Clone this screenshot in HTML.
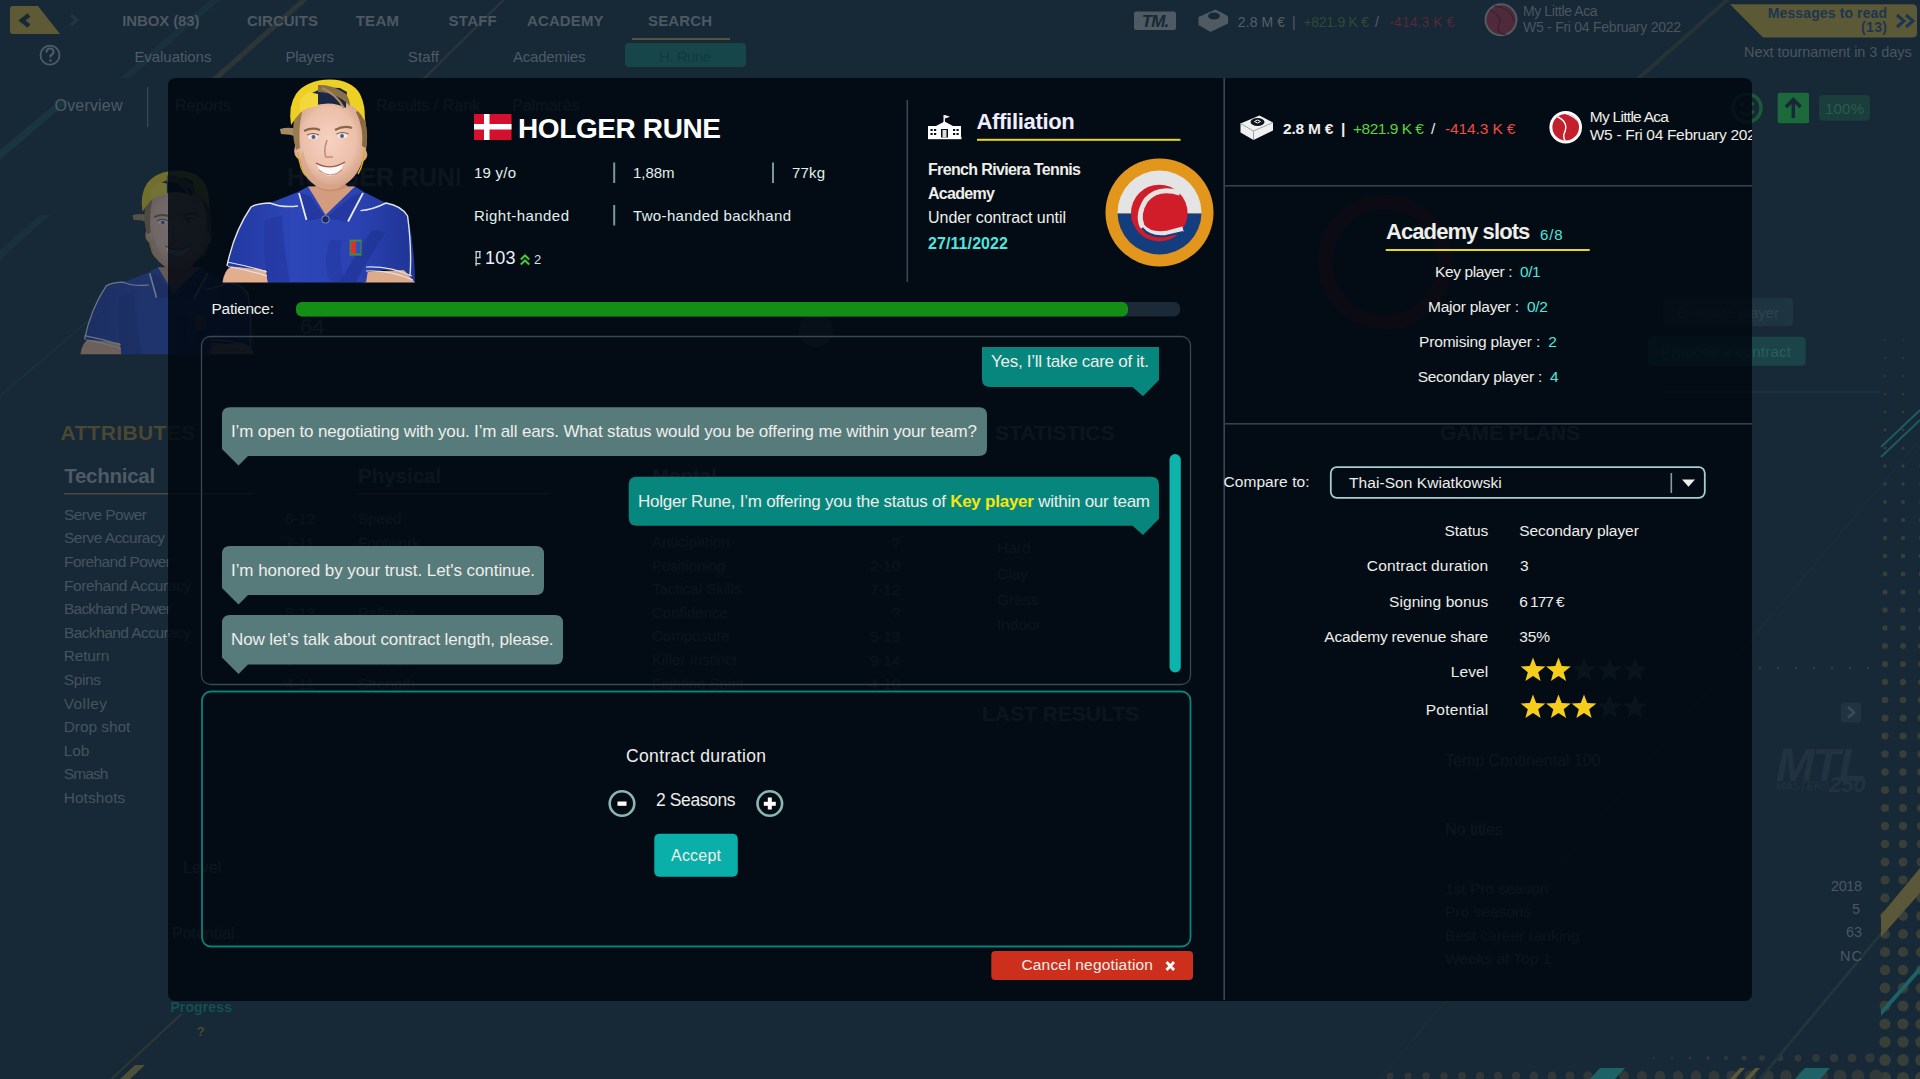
<!DOCTYPE html>
<html><head><meta charset="utf-8">
<style>
*{margin:0;padding:0;box-sizing:border-box}
html,body{width:1920px;height:1079px;overflow:hidden;background:#172836;font-family:"Liberation Sans",sans-serif;color:#fff}
.a{position:absolute;white-space:nowrap;line-height:1}
#modal{position:absolute;left:168px;top:78px;width:1584px;height:923px;background:rgba(0,7,15,0.84);border-radius:7px;overflow:hidden}
</style></head><body>
<svg class="a" style="left:0;top:0" width="1920" height="1079">
<path d="M120 78 L210 0 L220 0 L130 78 Z" fill="#1b3a44" opacity="0.5"/>
<path d="M212 78 L300 0 L308 0 L220 78 Z" fill="#3a3f38" opacity="0.6"/>
<path d="M421 80 L502 0 L505 0 L424 80 Z" fill="#3a3f38" opacity="0.6"/>
<path d="M0 150 L60 100 L70 100 L0 160 Z" fill="#1b3a44" opacity="0.7"/>
<path d="M0 250 L40 215 L50 215 L0 260 Z" fill="#1b3a44" opacity="0.5"/>
<path d="M0 395 L100 310 L102 310 L0 397 Z" fill="#1d3d48" opacity="0.5"/>
<path d="M110 1079 L180 1014 L183 1014 L113 1079 Z" fill="#343b36" opacity="0.8"/>
<path d="M120 1079 L135 1065 L145 1065 L130 1079 Z" fill="#5a5a38" opacity="0.8"/>
<path d="M1636 78 L1724 0 L1730 0 L1642 78 Z" fill="#343b36" opacity="0.5"/>
<circle cx="1885" cy="340" r="0.8" fill="#383e38"/>
<circle cx="1903" cy="340" r="0.8" fill="#383e38"/>
<circle cx="1921" cy="340" r="0.8" fill="#383e38"/>
<circle cx="1885" cy="358" r="0.9" fill="#383e38"/>
<circle cx="1903" cy="358" r="0.9" fill="#383e38"/>
<circle cx="1921" cy="358" r="0.9" fill="#383e38"/>
<circle cx="1885" cy="376" r="1.1" fill="#383e38"/>
<circle cx="1903" cy="376" r="1.1" fill="#383e38"/>
<circle cx="1921" cy="376" r="1.1" fill="#383e38"/>
<circle cx="1885" cy="394" r="1.2" fill="#383e38"/>
<circle cx="1903" cy="394" r="1.2" fill="#383e38"/>
<circle cx="1921" cy="394" r="1.2" fill="#383e38"/>
<circle cx="1885" cy="412" r="1.3" fill="#383e38"/>
<circle cx="1903" cy="412" r="1.3" fill="#383e38"/>
<circle cx="1921" cy="412" r="1.3" fill="#383e38"/>
<circle cx="1885" cy="430" r="1.4" fill="#383e38"/>
<circle cx="1903" cy="430" r="1.4" fill="#383e38"/>
<circle cx="1921" cy="430" r="1.4" fill="#383e38"/>
<circle cx="1885" cy="448" r="1.6" fill="#383e38"/>
<circle cx="1903" cy="448" r="1.6" fill="#383e38"/>
<circle cx="1921" cy="448" r="1.6" fill="#383e38"/>
<circle cx="1885" cy="466" r="1.7" fill="#383e38"/>
<circle cx="1903" cy="466" r="1.7" fill="#383e38"/>
<circle cx="1921" cy="466" r="1.7" fill="#383e38"/>
<circle cx="1885" cy="484" r="1.8" fill="#383e38"/>
<circle cx="1903" cy="484" r="1.8" fill="#383e38"/>
<circle cx="1921" cy="484" r="1.8" fill="#383e38"/>
<circle cx="1885" cy="502" r="1.9" fill="#383e38"/>
<circle cx="1903" cy="502" r="1.9" fill="#383e38"/>
<circle cx="1921" cy="502" r="1.9" fill="#383e38"/>
<circle cx="1885" cy="520" r="2.1" fill="#383e38"/>
<circle cx="1903" cy="520" r="2.1" fill="#383e38"/>
<circle cx="1921" cy="520" r="2.1" fill="#383e38"/>
<circle cx="1885" cy="538" r="2.2" fill="#383e38"/>
<circle cx="1903" cy="538" r="2.2" fill="#383e38"/>
<circle cx="1921" cy="538" r="2.2" fill="#383e38"/>
<circle cx="1885" cy="556" r="2.3" fill="#383e38"/>
<circle cx="1903" cy="556" r="2.3" fill="#383e38"/>
<circle cx="1921" cy="556" r="2.3" fill="#383e38"/>
<circle cx="1885" cy="574" r="2.4" fill="#383e38"/>
<circle cx="1903" cy="574" r="2.4" fill="#383e38"/>
<circle cx="1921" cy="574" r="2.4" fill="#383e38"/>
<circle cx="1885" cy="592" r="2.6" fill="#383e38"/>
<circle cx="1903" cy="592" r="2.6" fill="#383e38"/>
<circle cx="1921" cy="592" r="2.6" fill="#383e38"/>
<circle cx="1885" cy="610" r="2.7" fill="#383e38"/>
<circle cx="1903" cy="610" r="2.7" fill="#383e38"/>
<circle cx="1921" cy="610" r="2.7" fill="#383e38"/>
<circle cx="1885" cy="628" r="2.8" fill="#383e38"/>
<circle cx="1903" cy="628" r="2.8" fill="#383e38"/>
<circle cx="1921" cy="628" r="2.8" fill="#383e38"/>
<circle cx="1885" cy="646" r="3.0" fill="#383e38"/>
<circle cx="1903" cy="646" r="3.0" fill="#383e38"/>
<circle cx="1921" cy="646" r="3.0" fill="#383e38"/>
<circle cx="1885" cy="664" r="3.1" fill="#383e38"/>
<circle cx="1903" cy="664" r="3.1" fill="#383e38"/>
<circle cx="1921" cy="664" r="3.1" fill="#383e38"/>
<circle cx="1885" cy="682" r="3.2" fill="#383e38"/>
<circle cx="1903" cy="682" r="3.2" fill="#383e38"/>
<circle cx="1921" cy="682" r="3.2" fill="#383e38"/>
<circle cx="1885" cy="700" r="3.3" fill="#383e38"/>
<circle cx="1903" cy="700" r="3.3" fill="#383e38"/>
<circle cx="1921" cy="700" r="3.3" fill="#383e38"/>
<circle cx="1885" cy="718" r="3.5" fill="#383e38"/>
<circle cx="1903" cy="718" r="3.5" fill="#383e38"/>
<circle cx="1921" cy="718" r="3.5" fill="#383e38"/>
<circle cx="1885" cy="736" r="3.6" fill="#383e38"/>
<circle cx="1903" cy="736" r="3.6" fill="#383e38"/>
<circle cx="1921" cy="736" r="3.6" fill="#383e38"/>
<circle cx="1885" cy="754" r="3.7" fill="#383e38"/>
<circle cx="1903" cy="754" r="3.7" fill="#383e38"/>
<circle cx="1921" cy="754" r="3.7" fill="#383e38"/>
<circle cx="1885" cy="772" r="3.8" fill="#383e38"/>
<circle cx="1903" cy="772" r="3.8" fill="#383e38"/>
<circle cx="1921" cy="772" r="3.8" fill="#383e38"/>
<circle cx="1885" cy="790" r="4.0" fill="#383e38"/>
<circle cx="1903" cy="790" r="4.0" fill="#383e38"/>
<circle cx="1921" cy="790" r="4.0" fill="#383e38"/>
<circle cx="1885" cy="808" r="4.1" fill="#383e38"/>
<circle cx="1903" cy="808" r="4.1" fill="#383e38"/>
<circle cx="1921" cy="808" r="4.1" fill="#383e38"/>
<circle cx="1885" cy="826" r="4.2" fill="#383e38"/>
<circle cx="1903" cy="826" r="4.2" fill="#383e38"/>
<circle cx="1921" cy="826" r="4.2" fill="#383e38"/>
<circle cx="1885" cy="844" r="4.3" fill="#383e38"/>
<circle cx="1903" cy="844" r="4.3" fill="#383e38"/>
<circle cx="1921" cy="844" r="4.3" fill="#383e38"/>
<circle cx="1885" cy="862" r="4.5" fill="#383e38"/>
<circle cx="1903" cy="862" r="4.5" fill="#383e38"/>
<circle cx="1921" cy="862" r="4.5" fill="#383e38"/>
<circle cx="1885" cy="880" r="4.6" fill="#383e38"/>
<circle cx="1903" cy="880" r="4.6" fill="#383e38"/>
<circle cx="1921" cy="880" r="4.6" fill="#383e38"/>
<circle cx="1885" cy="898" r="4.7" fill="#383e38"/>
<circle cx="1903" cy="898" r="4.7" fill="#383e38"/>
<circle cx="1921" cy="898" r="4.7" fill="#383e38"/>
<circle cx="1885" cy="916" r="4.9" fill="#383e38"/>
<circle cx="1903" cy="916" r="4.9" fill="#383e38"/>
<circle cx="1921" cy="916" r="4.9" fill="#383e38"/>
<circle cx="1885" cy="934" r="5.0" fill="#383e38"/>
<circle cx="1903" cy="934" r="5.0" fill="#383e38"/>
<circle cx="1921" cy="934" r="5.0" fill="#383e38"/>
<circle cx="1885" cy="952" r="5.1" fill="#383e38"/>
<circle cx="1903" cy="952" r="5.1" fill="#383e38"/>
<circle cx="1921" cy="952" r="5.1" fill="#383e38"/>
<circle cx="1885" cy="970" r="5.2" fill="#383e38"/>
<circle cx="1903" cy="970" r="5.2" fill="#383e38"/>
<circle cx="1921" cy="970" r="5.2" fill="#383e38"/>
<circle cx="1885" cy="988" r="5.4" fill="#383e38"/>
<circle cx="1903" cy="988" r="5.4" fill="#383e38"/>
<circle cx="1921" cy="988" r="5.4" fill="#383e38"/>
<circle cx="1885" cy="1006" r="5.5" fill="#383e38"/>
<circle cx="1903" cy="1006" r="5.5" fill="#383e38"/>
<circle cx="1921" cy="1006" r="5.5" fill="#383e38"/>
<circle cx="1885" cy="1024" r="5.6" fill="#383e38"/>
<circle cx="1903" cy="1024" r="5.6" fill="#383e38"/>
<circle cx="1921" cy="1024" r="5.6" fill="#383e38"/>
<circle cx="1885" cy="1042" r="5.7" fill="#383e38"/>
<circle cx="1903" cy="1042" r="5.7" fill="#383e38"/>
<circle cx="1921" cy="1042" r="5.7" fill="#383e38"/>
<circle cx="1885" cy="1060" r="5.9" fill="#383e38"/>
<circle cx="1903" cy="1060" r="5.9" fill="#383e38"/>
<circle cx="1921" cy="1060" r="5.9" fill="#383e38"/>
<circle cx="1885" cy="1078" r="6.0" fill="#383e38"/>
<circle cx="1903" cy="1078" r="6.0" fill="#383e38"/>
<circle cx="1921" cy="1078" r="6.0" fill="#383e38"/>
<circle cx="1390" cy="1076" r="3.5" fill="#30383a"/>
<circle cx="1408" cy="1076" r="3.6" fill="#30383a"/>
<circle cx="1426" cy="1076" r="3.7" fill="#30383a"/>
<circle cx="1444" cy="1076" r="3.8" fill="#30383a"/>
<circle cx="1462" cy="1076" r="3.9" fill="#30383a"/>
<circle cx="1480" cy="1076" r="4.1" fill="#30383a"/>
<circle cx="1498" cy="1076" r="4.2" fill="#30383a"/>
<circle cx="1516" cy="1076" r="4.3" fill="#30383a"/>
<circle cx="1534" cy="1076" r="4.4" fill="#30383a"/>
<circle cx="1552" cy="1076" r="4.5" fill="#30383a"/>
<circle cx="1570" cy="1076" r="4.6" fill="#30383a"/>
<circle cx="1588" cy="1076" r="4.7" fill="#30383a"/>
<circle cx="1606" cy="1076" r="4.8" fill="#30383a"/>
<circle cx="1624" cy="1076" r="4.9" fill="#30383a"/>
<circle cx="1642" cy="1076" r="5.0" fill="#30383a"/>
<circle cx="1660" cy="1076" r="5.2" fill="#30383a"/>
<circle cx="1678" cy="1076" r="5.3" fill="#30383a"/>
<circle cx="1696" cy="1076" r="5.4" fill="#30383a"/>
<circle cx="1714" cy="1076" r="5.5" fill="#30383a"/>
<circle cx="1732" cy="1076" r="5.6" fill="#30383a"/>
<circle cx="1750" cy="1076" r="5.7" fill="#30383a"/>
<circle cx="1768" cy="1076" r="5.8" fill="#30383a"/>
<circle cx="1786" cy="1076" r="5.9" fill="#30383a"/>
<circle cx="1804" cy="1076" r="6.0" fill="#30383a"/>
<circle cx="1822" cy="1076" r="6.1" fill="#30383a"/>
<circle cx="1840" cy="1076" r="6.3" fill="#30383a"/>
<circle cx="1858" cy="1076" r="6.4" fill="#30383a"/>
<circle cx="1876" cy="1076" r="6.5" fill="#30383a"/>
<circle cx="1600" cy="1058" r="0.0" fill="#30383a"/>
<circle cx="1618" cy="1058" r="0.3" fill="#30383a"/>
<circle cx="1636" cy="1058" r="0.6" fill="#30383a"/>
<circle cx="1654" cy="1058" r="1.0" fill="#30383a"/>
<circle cx="1672" cy="1058" r="1.3" fill="#30383a"/>
<circle cx="1690" cy="1058" r="1.6" fill="#30383a"/>
<circle cx="1708" cy="1058" r="1.9" fill="#30383a"/>
<circle cx="1726" cy="1058" r="2.2" fill="#30383a"/>
<circle cx="1744" cy="1058" r="2.6" fill="#30383a"/>
<circle cx="1762" cy="1058" r="2.9" fill="#30383a"/>
<circle cx="1780" cy="1058" r="3.2" fill="#30383a"/>
<circle cx="1798" cy="1058" r="3.5" fill="#30383a"/>
<circle cx="1816" cy="1058" r="3.9" fill="#30383a"/>
<circle cx="1834" cy="1058" r="4.2" fill="#30383a"/>
<circle cx="1852" cy="1058" r="4.5" fill="#30383a"/>
<circle cx="1870" cy="1058" r="4.8" fill="#30383a"/>
<circle cx="1760" cy="668" r="1" fill="#3a4640"/>
<circle cx="1778" cy="668" r="1" fill="#3a4640"/>
<circle cx="1796" cy="668" r="1" fill="#3a4640"/>
<circle cx="1814" cy="668" r="1" fill="#3a4640"/>
<circle cx="1832" cy="668" r="1" fill="#3a4640"/>
<circle cx="1850" cy="668" r="1" fill="#3a4640"/>
<circle cx="1868" cy="668" r="1" fill="#3a4640"/>
<path d="M1881 915 L1920 868 L1920 893 L1881 937 Z" fill="#5a5838"/>
<path d="M1881 1010 L1920 966 L1920 972 L1881 1016 Z" fill="#1d6266"/>
<path d="M1881 447 L1920 410 M1881 457 L1920 420" stroke="#1d5a60" stroke-width="2"/>
<path d="M1760 1079 L1880 935" stroke="#22343c" stroke-width="3"/>
<path d="M1590 1079 L1600 1068 L1625 1068 L1615 1079 Z" fill="#1d6266"/>
<path d="M1795 1079 L1805 1068 L1830 1068 L1820 1079 Z" fill="#1d6266"/>
<path d="M1730 1079 L1740 1068 L1745 1068 L1735 1079 Z M1745 1079 L1755 1068 L1760 1068 L1750 1079 Z" fill="#5a5838"/>
<path d="M1380 1079 L1970 380" stroke="#1e3039" stroke-width="2" opacity="0.6"/>
<path d="M13 6 H38 L60 34 H13 Q10 34 10 31 V9 Q10 6 13 6 Z" fill="#5e5a35"/>
<path d="M29 15 L22 20.5 L29 26" stroke="#172836" stroke-width="4.5" fill="none"/>
<path d="M71 15 L77 20 L71 25" stroke="#233545" stroke-width="3" fill="none"/>
<rect x="632" y="38" width="98" height="2" fill="#58533a"/>
<circle cx="50" cy="55.2" r="9.5" fill="none" stroke="#4f5d68" stroke-width="1.8"/>
<path d="M46.5 52.5 Q46.5 48.5 50 48.5 Q53.5 48.5 53.5 52 Q53.5 54 50.5 55.5 L50.5 57.5" stroke="#4f5d68" stroke-width="2" fill="none"/><circle cx="50.5" cy="60.5" r="1.2" fill="#4f5d68"/>
<rect x="625" y="43" width="121" height="24" rx="4" fill="#17464a"/>
<rect x="64" y="493" width="190" height="1.5" fill="#4a4a36"/>
<rect x="358" y="493" width="192" height="1.5" fill="#4a4a36"/>
<rect x="652" y="493" width="192" height="1.5" fill="#4a4a36"/>
<rect x="147" y="87" width="1.2" height="40" fill="#3a4a55"/>
<rect x="1134" y="11.5" width="42" height="18.5" rx="2" fill="#4f5a62"/><text x="1155" y="27" font-family="Liberation Sans" font-weight="bold" font-style="italic" font-size="17" fill="#172836" text-anchor="middle" letter-spacing="-1">TM.</text>
<g transform="translate(1198.5,8)"><path d="M0 9 L17 1.5 L29.5 8 L29.5 15.5 L12 24 L0 17 Z" fill="#4f5a62"/><ellipse cx="15.5" cy="8" rx="6" ry="3.5" fill="#172836"/></g>
<circle cx="1501" cy="19.8" r="15.5" fill="#4e2a3a" stroke="#565a62" stroke-width="2"/>
<path d="M1490 10 Q1504 16 1498 28 Q1497 33 1506 35 M1494 6 Q1512 8 1514 22" stroke="#3a2030" stroke-width="1.2" fill="none"/>
<path d="M1730 4.3 H1912 Q1917 4.3 1917 9 V33 Q1917 37.6 1912 37.6 H1763 Z" fill="#5c5a36"/>
<path d="M1897 15 L1904 21 L1897 27 M1906 15 L1913 21 L1906 27" stroke="#1e3550" stroke-width="3" fill="none"/>
<circle cx="1747" cy="108" r="14" fill="none" stroke="#1a5a38" stroke-width="3.5"/><circle cx="1742" cy="104" r="2" fill="#1a5a38"/><circle cx="1752" cy="104" r="2" fill="#1a5a38"/><path d="M1740 111 Q1747 118 1754 111" stroke="#1a5a38" stroke-width="2.5" fill="none"/>
<rect x="1777.7" y="92.7" width="31.3" height="30.6" rx="2" fill="#1c6a3c"/><path d="M1793.3 118 V100 M1786 107 L1793.3 99.5 L1800.6 107" stroke="#172836" stroke-width="3.5" fill="none"/>
<rect x="1819" y="95" width="51" height="25.7" rx="4" fill="#1a3e3c"/>
<rect x="1663" y="298" width="130" height="28" rx="4" fill="#1f3441"/>
<rect x="1648" y="336.7" width="157.7" height="29" rx="4" fill="#1a4448"/>
<rect x="1660" y="391" width="220" height="2" fill="#1e3540" opacity="0.7"/>
<rect x="1841" y="702.4" width="20" height="20" rx="3" fill="#1f3340"/><path d="M1848 707 L1854 712.4 L1848 717.8" stroke="#3f4a52" stroke-width="2.5" fill="none"/>
<text x="1776" y="781" font-family="Liberation Sans" font-weight="bold" font-style="italic" font-size="46" fill="#223240" letter-spacing="-2">MTL</text>
<text x="1776" y="790" font-family="Liberation Sans" font-style="italic" font-size="11" fill="#223240">MASTERS</text>
<text x="1829" y="792" font-family="Liberation Sans" font-weight="bold" font-style="italic" font-size="22" fill="#223240">250</text>
</svg>
<div class="a" style="left:175px;top:98px;font-size:16px;color:#4f5b65">Reports</div>
<div class="a" style="left:376px;top:98px;font-size:16px;color:#4f5b65">Results / Rank</div>
<div class="a" style="left:512px;top:98px;font-size:16px;color:#4f5b65">Palmarès</div>
<div class="a" style="left:287px;top:160px;width:173px;height:36px;overflow:hidden"><div class="a" style="left:0;top:5px;font-size:25px;font-weight:bold;color:#4f5b65">HOLGER RUNE</div></div>
<div class="a" style="left:300px;top:316px;font-size:22px;color:#4f5b65">64</div>
<div class="a" style="left:358px;top:466px;font-size:20.5px;font-weight:bold;color:#4e5a64">Physical</div>
<div class="a" style="left:652px;top:466px;font-size:20.5px;font-weight:bold;color:#4e5a64">Mental</div>
<div class="a" style="left:358px;top:507px;font-size:15px;line-height:23.6px;color:#47535d">Speed<br>Footwork<br>Stamina<br>Endurance<br>Reflexes<br>Agility<br>Balance<br>Strength</div>
<div class="a" style="left:285px;top:507px;font-size:15px;line-height:23.6px;color:#47535d">6-12<br>7-11<br>6-11<br>?<br>8-13<br>?<br>?<br>4-11</div>
<div class="a" style="left:652px;top:530px;font-size:15px;line-height:23.6px;color:#47535d">Anticipation<br>Positioning<br>Tactical Skills<br>Confidence<br>Composure<br>Killer Instinct<br>Fighting Spirit</div>
<div class="a" style="left:860px;top:507px;font-size:15px;line-height:23.6px;color:#47535d;text-align:right;width:40px">?<br>?<br>2-10<br>7-12<br>?<br>5-13<br>9-14<br>4-10</div>
<div class="a" style="left:995px;top:422px;font-size:21px;font-weight:bold;color:#4e5a64">STATISTICS</div>
<div class="a" style="left:997px;top:535px;font-size:15.5px;line-height:25.8px;color:#47535d">Hard<br>Clay<br>Grass<br>Indoor</div>
<div class="a" style="left:982px;top:703px;font-size:21px;font-weight:bold;color:#4e5a64">LAST RESULTS</div>
<div class="a" style="left:1440px;top:422px;font-size:21px;font-weight:bold;color:#4e5a64">GAME PLANS</div>
<div class="a" style="left:1445px;top:753px;font-size:16px;color:#4f5b65">Temp Continental 100</div>
<div class="a" style="left:1445px;top:822px;font-size:16px;color:#4f5b65">No titles</div>
<div class="a" style="left:1445px;top:877px;font-size:15.5px;line-height:23.4px;color:#47535d">1st Pro season<br>Pro seasons<br>Best career ranking<br>Weeks at Top 1</div>
<div class="a" style="left:183px;top:860px;font-size:16px;color:#4f5b65">Level</div>
<div class="a" style="left:172px;top:926px;font-size:16px;color:#4f5b65">Potential</div>
<svg class="a" style="left:0;top:0" width="1920" height="1079"><circle cx="1385" cy="262" r="60" fill="none" stroke="#5a2030" stroke-width="14" opacity="0.8"/><circle cx="816" cy="330" r="17" fill="#2e3a44"/></svg>
<svg class="a" style="left:0;top:0" width="1920" height="1079"><g opacity="0.42" transform="translate(80,170) scale(0.905) translate(-222,-79)">
 <!-- arms -->
 <path d="M222.5 282.5 Q224 270 232 266 L266 270 L268 282.5 Z" fill="#e3ae8e"/>
 <path d="M364 272 L404 270 Q412 274 415 282.5 L364 282.5 Z" fill="#ddaa8c"/>
 <!-- shirt body -->
 <path d="M227 266 Q236 230 251 207 Q258 203 270 203 L298 192 L308 186.5 L355 186.5 L364 192 L386 203 Q402 206 408 216 Q415 250 415 282.5 L404 270 L368 270 L366 282.5 L268 282.5 L267 270 Z" fill="url(#shg)"/>
 <path d="M265 220 Q262 250 268 282 L290 282 Q284 250 282 215 Z" fill="#2338a0" opacity="0.7"/>
 <path d="M330 240 Q322 262 330 282 L345 282 Q338 262 342 240 Z" fill="#2338a0" opacity="0.6"/>
 <path d="M372 230 Q352 260 340 282 L356 282 Q368 258 386 232 Z" fill="#1e3290" opacity="0.6"/>
 <!-- neck -->
 <path d="M308 186.5 L355 186.5 L325.5 215 Z" fill="#d49c7e"/>
 <path d="M315 186.5 Q330 196 348 186.5 L340 180 L320 180 Z" fill="#c88e70"/>
 <!-- collar -->
 <path d="M298 192 L306 221 L325.5 218 L310 196 Z" fill="#2338a0"/>
 <path d="M364 192 L348.5 222 L325.5 218 L352 196 Z" fill="#2338a0"/>
 <path d="M299 193 L306.5 220" stroke="#e8ecf4" stroke-width="1.8"/>
 <path d="M363 193 L348 221.5" stroke="#e8ecf4" stroke-width="1.8"/>
 <circle cx="325.5" cy="219.4" r="3.8" fill="#1a2660" stroke="#8090b0" stroke-width="1"/>
 <!-- seams -->
 <path d="M227 266 Q234 232 251 207 Q258 203 270 203 Q282 208 298 206" stroke="#dde2f0" stroke-width="1.4" fill="none"/>
 <path d="M360.5 210.6 Q372 210 386 203 Q402 206 407.6 216 Q412 250 410 276" stroke="#dde2f0" stroke-width="1.4" fill="none"/>
 <path d="M227 262 Q248 266 267 272 M228 266.5 Q248 270 267 276" stroke="#dde2f0" stroke-width="1.2" fill="none"/>
 <path d="M366 267 Q390 266 412 276 M366 271 Q390 270 413 280" stroke="#dde2f0" stroke-width="1.2" fill="none"/>
 <rect x="349.6" y="239.6" width="12" height="16" fill="#4a8a3a"/><rect x="351" y="241.5" width="5" height="12" fill="#d8302a"/><rect x="356" y="241.5" width="4.5" height="12" fill="#2a52c0"/>
 <!-- hair lock left -->
 <path d="M280 129 Q290 126 300 130 L298 137 Q290 134 281 134 Z" fill="#a88a62"/>
 <!-- face -->
 <path d="M296 112 Q300 100 330 100 Q362 100 365 118 Q368 140 366 150 Q370 158 362 162 Q356 180 340 187 Q330 192 318 187 Q302 178 300 160 Q292 156 295 146 Q294 130 296 112 Z" fill="url(#fg)"/>
 <path d="M300 160 Q304 178 320 188 Q332 192 342 187 Q330 186 318 180 Q306 170 303 150 Z" fill="#d9a58a" opacity="0.7"/>
 <path d="M296 112 Q290 130 296 150 L300 148 Q298 130 302 112 Z" fill="#9a7a50"/>
 <path d="M360 110 Q370 126 366 148 L362 146 Q364 128 356 112 Z" fill="#8a6a40"/>
 <!-- brows, eyes -->
 <path d="M304 131 Q312 127 320 130" stroke="#8a6648" stroke-width="2.2" fill="none"/>
 <path d="M335 130 Q344 125 352 128" stroke="#8a6648" stroke-width="2.2" fill="none"/>
 <ellipse cx="313" cy="137" rx="5" ry="2.2" fill="#f4e8e4"/><circle cx="313.5" cy="137" r="2" fill="#4a6088"/>
 <ellipse cx="342.5" cy="136" rx="5" ry="2.2" fill="#f4e8e4"/><circle cx="342" cy="136" r="2" fill="#4a6088"/>
 <path d="M307 135 Q313 132 319 135" stroke="#7a5a48" stroke-width="1.2" fill="none"/>
 <path d="M336.5 134 Q342.5 131 348.5 134" stroke="#7a5a48" stroke-width="1.2" fill="none"/>
 <path d="M327 140 Q323 152 326 157 L333 157" stroke="#c48c70" stroke-width="1.6" fill="none"/>
 <!-- smile -->
 <path d="M317 164 Q330 172 344 163 Q340 175 330 176 Q320 175 317 164 Z" fill="#fafafa"/>
 <path d="M316 163 Q330 171 345 162" stroke="#9a5040" stroke-width="1.2" fill="none"/>
 <path d="M319 170 Q330 180 342 170" stroke="#c88070" stroke-width="1" fill="none"/>
 <!-- cap -->
 <path d="M291 125 Q288 106 296 94 Q306 80 330 79.5 Q352 80 360 94 Q366 106 364.5 120.5 Q358 108 348 104 Q330 98 312 104 Q300 110 291 125 Z" fill="#edd024"/>
 <path d="M305 98 Q318 86 340 88 L347 92 Q346 100 346 108 Q332 100 312 106 Z" fill="#1b2844"/>
 <path d="M300 100 L308 92 L318 94 L318 106 Q306 108 300 112 Z" fill="#f2d83a"/>
 <path d="M318 85 Q332 84 346 94 Q350 100 350 106 Q336 92 318 92 Z" fill="#8a6e48"/>
 <path d="M322 88 Q336 94 344 108" stroke="#a88a60" stroke-width="2" fill="none"/>
 <path d="M298 152 Q300 170 306 176" stroke="#d8b020" stroke-width="1.5" fill="none"/>
 <path d="M364 150 Q364 164 358 174" stroke="#d8b020" stroke-width="1.5" fill="none"/>
</g></svg>
<div id="t1000" class="a" style="left:122.3px;top:12.7px;font-size:15px;color:#4d5862;letter-spacing:-0.129px;font-weight:bold">INBOX (83)</div>
<div id="t1001" class="a" style="left:247.0px;top:12.7px;font-size:15px;color:#4d5862;letter-spacing:0.022px;font-weight:bold">CIRCUITS</div>
<div id="t1002" class="a" style="left:355.7px;top:12.7px;font-size:15px;color:#4d5862;letter-spacing:0.267px;font-weight:bold">TEAM</div>
<div id="t1003" class="a" style="left:448.6px;top:12.7px;font-size:15px;color:#4d5862;letter-spacing:0.245px;font-weight:bold">STAFF</div>
<div id="t1004" class="a" style="left:527.0px;top:12.7px;font-size:15px;color:#4d5862;letter-spacing:0.109px;font-weight:bold">ACADEMY</div>
<div id="t1005" class="a" style="left:648.0px;top:12.7px;font-size:15px;color:#4d5862;letter-spacing:0.131px;font-weight:bold">SEARCH</div>
<div id="t1006" class="a" style="left:134.4px;top:48.8px;font-size:15px;color:#4f5b65;letter-spacing:-0.056px">Evaluations</div>
<div id="t1007" class="a" style="left:285.5px;top:48.8px;font-size:15px;color:#4f5b65;letter-spacing:-0.255px">Players</div>
<div id="t1008" class="a" style="left:407.8px;top:48.8px;font-size:15px;color:#4f5b65;letter-spacing:0.164px">Staff</div>
<div id="t1009" class="a" style="left:513.0px;top:48.8px;font-size:15px;color:#4f5b65;letter-spacing:-0.225px">Academies</div>
<div id="t1010" class="a" style="left:659.0px;top:48.8px;font-size:15px;color:#0e3a40;letter-spacing:-0.505px">H. Rune</div>
<div id="t1011" class="a" style="left:54.5px;top:98.2px;font-size:16px;color:#4f5b65;letter-spacing:0.188px">Overview</div>
<div id="t1012" class="a" style="left:1237.8px;top:14.8px;font-size:14px;color:#575f66;letter-spacing:0.091px">2.8 M €</div>
<div id="t1013" class="a" style="left:1292.0px;top:14.8px;font-size:14px;color:#575f66;letter-spacing:0.000px">|</div>
<div id="t1014" class="a" style="left:1303.4px;top:14.8px;font-size:14px;color:#2c4c37;letter-spacing:-0.281px">+821.9 K €</div>
<div id="t1015" class="a" style="left:1375.0px;top:14.8px;font-size:14px;color:#575f66;letter-spacing:0.000px">/</div>
<div id="t1016" class="a" style="left:1389.4px;top:14.8px;font-size:14px;color:#582a37;letter-spacing:0.032px">-414.3 K €</div>
<div id="t1017" class="a" style="left:1523.0px;top:4.3px;font-size:14px;color:#4b565e;letter-spacing:-0.398px">My Little Aca</div>
<div id="t1018" class="a" style="left:1523.0px;top:20.1px;font-size:14px;color:#4b565e;letter-spacing:-0.257px">W5 - Fri 04 February 2022</div>
<div id="t1019" class="a" style="left:1767.8px;top:6.1px;font-size:14px;color:#1e3550;letter-spacing:0.113px;font-weight:bold">Messages to read</div>
<div id="t1020" class="a" style="left:1861.0px;top:20.1px;font-size:14px;color:#1e3550;letter-spacing:0.365px;font-weight:bold">(13)</div>
<div id="t1021" class="a" style="left:1744.0px;top:45.4px;font-size:14.5px;color:#4b565e;letter-spacing:-0.065px">Next tournament in 3 days</div>
<div id="t1022" class="a" style="left:1825.0px;top:101.3px;font-size:15px;color:#2d5a52;letter-spacing:0.208px">100%</div>
<div id="t1023" class="a" style="left:1677.0px;top:305.3px;font-size:15px;color:#2e4450;letter-spacing:-0.100px">Evaluate player</div>
<div id="t1024" class="a" style="left:1661.0px;top:344.3px;font-size:15px;color:#2a5e5e;letter-spacing:0.241px">Propose a contract</div>
<div id="t1025" class="a" style="left:60.5px;top:421.9px;font-size:21px;color:#4a4832;letter-spacing:0.340px;font-weight:bold">ATTRIBUTES</div>
<div id="t1026" class="a" style="left:64.2px;top:466.0px;font-size:20.5px;color:#4e5a64;letter-spacing:-0.256px;font-weight:bold">Technical</div>
<div id="t1027" class="a" style="left:64.0px;top:506.7px;font-size:15.5px;color:#47535d;letter-spacing:-0.573px">Serve Power</div>
<div id="t1028" class="a" style="left:64.0px;top:530.3px;font-size:15.5px;color:#47535d;letter-spacing:-0.522px">Serve Accuracy</div>
<div id="t1029" class="a" style="left:64.0px;top:553.9px;font-size:15.5px;color:#47535d;letter-spacing:-0.584px">Forehand Power</div>
<div id="t1030" class="a" style="left:64.0px;top:577.5px;font-size:15.5px;color:#47535d;letter-spacing:-0.409px">Forehand Accuracy</div>
<div id="t1031" class="a" style="left:64.0px;top:601.1px;font-size:15.5px;color:#47535d;letter-spacing:-0.784px">Backhand Power</div>
<div id="t1032" class="a" style="left:64.0px;top:624.7px;font-size:15.5px;color:#47535d;letter-spacing:-0.571px">Backhand Accuracy</div>
<div id="t1033" class="a" style="left:63.7px;top:648.3px;font-size:15.5px;color:#47535d;letter-spacing:-0.166px">Return</div>
<div id="t1034" class="a" style="left:63.7px;top:671.9px;font-size:15.5px;color:#47535d;letter-spacing:-0.370px">Spins</div>
<div id="t1035" class="a" style="left:63.7px;top:695.5px;font-size:15.5px;color:#47535d;letter-spacing:0.385px">Volley</div>
<div id="t1036" class="a" style="left:63.7px;top:719.1px;font-size:15.5px;color:#47535d;letter-spacing:-0.075px">Drop shot</div>
<div id="t1037" class="a" style="left:63.7px;top:742.7px;font-size:15.5px;color:#47535d;letter-spacing:-0.038px">Lob</div>
<div id="t1038" class="a" style="left:63.7px;top:766.3px;font-size:15.5px;color:#47535d;letter-spacing:-0.863px">Smash</div>
<div id="t1039" class="a" style="left:63.7px;top:789.9px;font-size:15.5px;color:#47535d;letter-spacing:0.061px">Hotshots</div>
<div id="t1040" class="a" style="left:170.4px;top:1000.1px;font-size:14px;color:#145050;letter-spacing:0.128px;font-weight:bold">Progress</div>
<div id="t1041" class="a" style="left:196.8px;top:1024.6px;font-size:13px;color:#4a4a30;letter-spacing:0.000px;font-weight:bold">?</div>
<div id="t1042" class="a" style="left:1831.0px;top:878.7px;font-size:14.5px;color:#4b5760;letter-spacing:-0.422px">2018</div>
<div id="t1043" class="a" style="left:1852.0px;top:902.0px;font-size:14.5px;color:#4b5760;letter-spacing:0.000px">5</div>
<div id="t1044" class="a" style="left:1846.0px;top:925.4px;font-size:14.5px;color:#4b5760;letter-spacing:-0.141px">63</div>
<div id="t1045" class="a" style="left:1840.0px;top:948.7px;font-size:14.5px;color:#4b5760;letter-spacing:1.047px">NC</div>
<div id="modal">
<svg class="a" style="left:0;top:0" width="260" height="210"><defs><radialGradient id="fg" cx="0.48" cy="0.45" r="0.6"><stop offset="0" stop-color="#f6d2c2"/><stop offset="0.6" stop-color="#ecc0aa"/><stop offset="1" stop-color="#c9957a"/></radialGradient><linearGradient id="shg" x1="0" y1="0" x2="1" y2="0"><stop offset="0" stop-color="#2238a0"/><stop offset="0.35" stop-color="#2d46b8"/><stop offset="0.7" stop-color="#2a42b2"/><stop offset="1" stop-color="#1f3494"/></linearGradient></defs><g transform="translate(-168,-78)">
 <!-- arms -->
 <path d="M222.5 282.5 Q224 270 232 266 L266 270 L268 282.5 Z" fill="#e3ae8e"/>
 <path d="M364 272 L404 270 Q412 274 415 282.5 L364 282.5 Z" fill="#ddaa8c"/>
 <!-- shirt body -->
 <path d="M227 266 Q236 230 251 207 Q258 203 270 203 L298 192 L308 186.5 L355 186.5 L364 192 L386 203 Q402 206 408 216 Q415 250 415 282.5 L404 270 L368 270 L366 282.5 L268 282.5 L267 270 Z" fill="url(#shg)"/>
 <path d="M265 220 Q262 250 268 282 L290 282 Q284 250 282 215 Z" fill="#2338a0" opacity="0.7"/>
 <path d="M330 240 Q322 262 330 282 L345 282 Q338 262 342 240 Z" fill="#2338a0" opacity="0.6"/>
 <path d="M372 230 Q352 260 340 282 L356 282 Q368 258 386 232 Z" fill="#1e3290" opacity="0.6"/>
 <!-- neck -->
 <path d="M308 186.5 L355 186.5 L325.5 215 Z" fill="#d49c7e"/>
 <path d="M315 186.5 Q330 196 348 186.5 L340 180 L320 180 Z" fill="#c88e70"/>
 <!-- collar -->
 <path d="M298 192 L306 221 L325.5 218 L310 196 Z" fill="#2338a0"/>
 <path d="M364 192 L348.5 222 L325.5 218 L352 196 Z" fill="#2338a0"/>
 <path d="M299 193 L306.5 220" stroke="#e8ecf4" stroke-width="1.8"/>
 <path d="M363 193 L348 221.5" stroke="#e8ecf4" stroke-width="1.8"/>
 <circle cx="325.5" cy="219.4" r="3.8" fill="#1a2660" stroke="#8090b0" stroke-width="1"/>
 <!-- seams -->
 <path d="M227 266 Q234 232 251 207 Q258 203 270 203 Q282 208 298 206" stroke="#dde2f0" stroke-width="1.4" fill="none"/>
 <path d="M360.5 210.6 Q372 210 386 203 Q402 206 407.6 216 Q412 250 410 276" stroke="#dde2f0" stroke-width="1.4" fill="none"/>
 <path d="M227 262 Q248 266 267 272 M228 266.5 Q248 270 267 276" stroke="#dde2f0" stroke-width="1.2" fill="none"/>
 <path d="M366 267 Q390 266 412 276 M366 271 Q390 270 413 280" stroke="#dde2f0" stroke-width="1.2" fill="none"/>
 <rect x="349.6" y="239.6" width="12" height="16" fill="#4a8a3a"/><rect x="351" y="241.5" width="5" height="12" fill="#d8302a"/><rect x="356" y="241.5" width="4.5" height="12" fill="#2a52c0"/>
 <!-- hair lock left -->
 <path d="M280 129 Q290 126 300 130 L298 137 Q290 134 281 134 Z" fill="#a88a62"/>
 <!-- face -->
 <path d="M296 112 Q300 100 330 100 Q362 100 365 118 Q368 140 366 150 Q370 158 362 162 Q356 180 340 187 Q330 192 318 187 Q302 178 300 160 Q292 156 295 146 Q294 130 296 112 Z" fill="url(#fg)"/>
 <path d="M300 160 Q304 178 320 188 Q332 192 342 187 Q330 186 318 180 Q306 170 303 150 Z" fill="#d9a58a" opacity="0.7"/>
 <path d="M296 112 Q290 130 296 150 L300 148 Q298 130 302 112 Z" fill="#9a7a50"/>
 <path d="M360 110 Q370 126 366 148 L362 146 Q364 128 356 112 Z" fill="#8a6a40"/>
 <!-- brows, eyes -->
 <path d="M304 131 Q312 127 320 130" stroke="#8a6648" stroke-width="2.2" fill="none"/>
 <path d="M335 130 Q344 125 352 128" stroke="#8a6648" stroke-width="2.2" fill="none"/>
 <ellipse cx="313" cy="137" rx="5" ry="2.2" fill="#f4e8e4"/><circle cx="313.5" cy="137" r="2" fill="#4a6088"/>
 <ellipse cx="342.5" cy="136" rx="5" ry="2.2" fill="#f4e8e4"/><circle cx="342" cy="136" r="2" fill="#4a6088"/>
 <path d="M307 135 Q313 132 319 135" stroke="#7a5a48" stroke-width="1.2" fill="none"/>
 <path d="M336.5 134 Q342.5 131 348.5 134" stroke="#7a5a48" stroke-width="1.2" fill="none"/>
 <path d="M327 140 Q323 152 326 157 L333 157" stroke="#c48c70" stroke-width="1.6" fill="none"/>
 <!-- smile -->
 <path d="M317 164 Q330 172 344 163 Q340 175 330 176 Q320 175 317 164 Z" fill="#fafafa"/>
 <path d="M316 163 Q330 171 345 162" stroke="#9a5040" stroke-width="1.2" fill="none"/>
 <path d="M319 170 Q330 180 342 170" stroke="#c88070" stroke-width="1" fill="none"/>
 <!-- cap -->
 <path d="M291 125 Q288 106 296 94 Q306 80 330 79.5 Q352 80 360 94 Q366 106 364.5 120.5 Q358 108 348 104 Q330 98 312 104 Q300 110 291 125 Z" fill="#edd024"/>
 <path d="M305 98 Q318 86 340 88 L347 92 Q346 100 346 108 Q332 100 312 106 Z" fill="#1b2844"/>
 <path d="M300 100 L308 92 L318 94 L318 106 Q306 108 300 112 Z" fill="#f2d83a"/>
 <path d="M318 85 Q332 84 346 94 Q350 100 350 106 Q336 92 318 92 Z" fill="#8a6e48"/>
 <path d="M322 88 Q336 94 344 108" stroke="#a88a60" stroke-width="2" fill="none"/>
 <path d="M298 152 Q300 170 306 176" stroke="#d8b020" stroke-width="1.5" fill="none"/>
 <path d="M364 150 Q364 164 358 174" stroke="#d8b020" stroke-width="1.5" fill="none"/>
</g></svg>
<svg class="a" style="left:0;top:0" width="1584" height="922"><g transform="translate(-168,-78)">
<rect x="906.5" y="100" width="1.6" height="182" fill="#3b4652"/>
<rect x="613.2" y="162.5" width="2" height="20.5" fill="#7a9896"/>
<rect x="772" y="162.5" width="2" height="20.5" fill="#7a9896"/>
<rect x="613.2" y="205" width="2" height="20.5" fill="#7a9896"/>
<rect x="296" y="302" width="884" height="14.5" rx="6" fill="#1b2a36"/>
<rect x="296" y="302" width="832" height="14.5" rx="6" fill="#138f16"/>
<rect x="201.5" y="336.5" width="989" height="348" rx="9" fill="none" stroke="#3a4650" stroke-width="1.3"/>
<rect x="1169.5" y="454" width="11.3" height="218.5" rx="5.6" fill="#0db4ac"/>
<clipPath id="chatclip"><rect x="202" y="347" width="988" height="337"/></clipPath><g clip-path="url(#chatclip)">
<path d="M982 340 Q982 340 982 340 H1159 Q1159 340 1159 340 V380 L1143 396.2 L1132.5 387 H990 Q982 387 982 379 Z" fill="#06867d"/>
</g>
<path d="M222 415.3 Q222 407.3 230 407.3 H979 Q987 407.3 987 415.3 V448 Q987 456 979 456 H248 L238.5 465.5 L222 449 Z" fill="#577a7b"/>
<path d="M628.7 484.7 Q628.7 476.7 636.7 476.7 H1151 Q1159 476.7 1159 484.7 V518.8 L1143 535.0 L1132.5 525.8 H636.7 Q628.7 525.8 628.7 517.8 Z" fill="#06867d"/>
<path d="M222 554 Q222 546 230 546 H536 Q544 546 544 554 V587 Q544 595 536 595 H248 L238.5 604.5 L222 588 Z" fill="#577a7b"/>
<path d="M222 623 Q222 615 230 615 H555 Q563 615 563 623 V656.4 Q563 664.4 555 664.4 H248 L238.5 673.9 L222 657.4 Z" fill="#577a7b"/>
<rect x="202" y="691.5" width="988.5" height="255" rx="9" fill="none" stroke="#098278" stroke-width="1.8"/>
<circle cx="622" cy="803.5" r="12.3" fill="none" stroke="#8db6b3" stroke-width="2.6"/><rect x="617.5" y="801.5" width="9" height="4.3" fill="#fff"/>
<circle cx="769.8" cy="803.5" r="12.3" fill="none" stroke="#8db6b3" stroke-width="2.6"/><rect x="763.8" y="801.8" width="12" height="4" fill="#fff"/><rect x="767.8" y="797.5" width="4" height="12" fill="#fff"/>
<rect x="654.3" y="833.8" width="83.5" height="43" rx="5" fill="#0aafa9"/>
<rect x="991.3" y="951" width="201.7" height="29" rx="4" fill="#cc2f1c"/>
<path d="M1166.5 962 L1174 970 M1174 962 L1166.5 970" stroke="#fff" stroke-width="2.8"/>
<rect x="1223.4" y="78" width="1.6" height="923" fill="#3a4652"/>
<rect x="1224" y="185" width="528" height="1.6" fill="#34414c"/>
<rect x="1224" y="423" width="528" height="1.6" fill="#34414c"/>
<rect x="977" y="138.8" width="203.5" height="2" fill="#e8d81a"/>
<rect x="1385.7" y="249" width="204" height="2" fill="#e8d81a"/>
<rect x="1330.8" y="467.2" width="374" height="30.6" rx="6" fill="none" stroke="#a6cecd" stroke-width="1.8"/>
<rect x="1670.5" y="473" width="1.6" height="20" fill="#8a9a9a"/>
<path d="M1682 479.5 H1695 L1688.5 486.8 Z" fill="#eeeeea"/>
<polygon points="1584.00,657.50 1587.21,666.08 1596.36,666.48 1589.19,672.19 1591.64,681.02 1584.00,675.96 1576.36,681.02 1578.81,672.19 1571.64,666.48 1580.79,666.08" fill="#09131b"/>
<polygon points="1609.50,657.50 1612.71,666.08 1621.86,666.48 1614.69,672.19 1617.14,681.02 1609.50,675.96 1601.86,681.02 1604.31,672.19 1597.14,666.48 1606.29,666.08" fill="#09131b"/>
<polygon points="1635.00,657.50 1638.21,666.08 1647.36,666.48 1640.19,672.19 1642.64,681.02 1635.00,675.96 1627.36,681.02 1629.81,672.19 1622.64,666.48 1631.79,666.08" fill="#09131b"/>
<polygon points="1609.50,694.50 1612.71,703.08 1621.86,703.48 1614.69,709.19 1617.14,718.02 1609.50,712.96 1601.86,718.02 1604.31,709.19 1597.14,703.48 1606.29,703.08" fill="#09131b"/>
<polygon points="1635.00,694.50 1638.21,703.08 1647.36,703.48 1640.19,709.19 1642.64,718.02 1635.00,712.96 1627.36,718.02 1629.81,709.19 1622.64,703.48 1631.79,703.08" fill="#09131b"/>
<polygon points="1533.00,657.50 1536.21,666.08 1545.36,666.48 1538.19,672.19 1540.64,681.02 1533.00,675.96 1525.36,681.02 1527.81,672.19 1520.64,666.48 1529.79,666.08" fill="#f5cd1a"/>
<polygon points="1558.50,657.50 1561.71,666.08 1570.86,666.48 1563.69,672.19 1566.14,681.02 1558.50,675.96 1550.86,681.02 1553.31,672.19 1546.14,666.48 1555.29,666.08" fill="#f5cd1a"/>
<polygon points="1533.00,694.50 1536.21,703.08 1545.36,703.48 1538.19,709.19 1540.64,718.02 1533.00,712.96 1525.36,718.02 1527.81,709.19 1520.64,703.48 1529.79,703.08" fill="#f5cd1a"/>
<polygon points="1558.50,694.50 1561.71,703.08 1570.86,703.48 1563.69,709.19 1566.14,718.02 1558.50,712.96 1550.86,718.02 1553.31,709.19 1546.14,703.48 1555.29,703.08" fill="#f5cd1a"/>
<polygon points="1584.00,694.50 1587.21,703.08 1596.36,703.48 1589.19,709.19 1591.64,718.02 1584.00,712.96 1576.36,718.02 1578.81,709.19 1571.64,703.48 1580.79,703.08" fill="#f5cd1a"/>
<rect x="474" y="114" width="37.5" height="26" fill="#d4102e"/><rect x="484" y="114" width="5.5" height="26" fill="#fff"/><rect x="474" y="124" width="37.5" height="5.5" fill="#fff"/>
<path d="M520.8 259.5 L525 255.5 L529.2 259.5 M520.8 264.5 L525 260.5 L529.2 264.5" stroke="#4cc63c" stroke-width="2" fill="none"/>
<rect x="475.5" y="251" width="1.3" height="15" fill="#c8d0d0"/><rect x="475.5" y="251" width="5" height="1.3" fill="#c8d0d0"/><rect x="475.5" y="257" width="5" height="1.3" fill="#c8d0d0"/><rect x="475.5" y="263" width="5" height="1.3" fill="#c8d0d0"/><rect x="479.2" y="251" width="1.3" height="7" fill="#c8d0d0"/>
<g transform="translate(928,115)"><rect x="15.5" y="0" width="1.4" height="8" fill="#fff"/><path d="M16.9 0 L22 1.8 L16.9 3.6 Z" fill="#fff"/><path d="M8 11 L16.5 6.5 L25 11 Z" fill="#fff"/><rect x="0" y="11" width="33" height="12" fill="#fff"/><rect x="0" y="22" width="33.5" height="2.2" fill="#fff"/><rect x="13" y="14" width="7" height="8.5" fill="#040c14"/><rect x="14.5" y="15" width="4" height="7.5" fill="#ddd"/><rect x="2.5" y="14" width="2.2" height="2" fill="#040c14"/><rect x="2.5" y="18" width="2.2" height="2" fill="#040c14"/><rect x="6" y="14" width="2.2" height="2" fill="#040c14"/><rect x="6" y="18" width="2.2" height="2" fill="#040c14"/><rect x="25" y="14" width="2.2" height="2" fill="#040c14"/><rect x="25" y="18" width="2.2" height="2" fill="#040c14"/><rect x="28.5" y="14" width="2.2" height="2" fill="#040c14"/><rect x="28.5" y="18" width="2.2" height="2" fill="#040c14"/></g>
<g><circle cx="1159.5" cy="212.5" r="54" fill="#e3961c"/><clipPath id="acc"><circle cx="1159.5" cy="212.5" r="42"/></clipPath><g clip-path="url(#acc)"><rect x="1110" y="160" width="100" height="53.5" fill="#e4e4e4"/><rect x="1110" y="213.5" width="100" height="60" fill="#143d7e"/></g><circle cx="1159.3" cy="213" r="28.3" fill="#d11d29"/><path d="M1180 193 Q1158 186 1146 200 Q1137 214 1142 226 Q1150 236 1168 233 L1183 229" stroke="#e4e4e4" stroke-width="5" fill="none"/><path d="M1142 228 Q1150 238 1166 236 L1183 232" stroke="#143d7e" stroke-width="2.2" fill="none"/></g>
<g transform="translate(1240.5,113.5)"><path d="M0 10 L19 2 L32.5 9 L32.5 17 L13 26.5 L0 19 Z" fill="#f0f0f0"/><path d="M0 10 L13 17.5 L32.5 9 M13 17.5 V26.5" stroke="#9aa6a8" stroke-width="1" fill="none"/><ellipse cx="17" cy="8.5" rx="7" ry="4" fill="#0c1620"/><path d="M14 8 Q17 5 20 8 Q17 11 14 8" stroke="#f0f0f0" stroke-width="1" fill="none"/></g>
<g><circle cx="1565.7" cy="127.2" r="16.3" fill="#fff"/><circle cx="1565.7" cy="127.2" r="13.3" fill="#c41f2d"/><clipPath id="tb"><circle cx="1565.7" cy="127.2" r="13.3"/></clipPath><g clip-path="url(#tb)"><path d="M1556 116 Q1570 122 1564 134 Q1562 142 1574 146" stroke="#fff" stroke-width="1.4" fill="none"/><path d="M1560 112 Q1580 116 1582 130" stroke="#fff" stroke-width="1.4" fill="none"/></g></g>
</g></svg>
<div id="t0" class="a" style="left:350.0px;top:37.3px;font-size:28px;color:#fff;letter-spacing:-0.391px;font-weight:bold">HOLGER RUNE</div>
<div id="t1" class="a" style="left:306.0px;top:86.8px;font-size:15px;color:#e0f0ee;letter-spacing:0.225px">19 y/o</div>
<div id="t2" class="a" style="left:465.0px;top:86.8px;font-size:15px;color:#e0f0ee;letter-spacing:-0.051px">1,88m</div>
<div id="t3" class="a" style="left:624.0px;top:86.8px;font-size:15px;color:#e0f0ee;letter-spacing:0.156px">77kg</div>
<div id="t4" class="a" style="left:306.0px;top:129.7px;font-size:15px;color:#e0f0ee;letter-spacing:0.447px">Right-handed</div>
<div id="t5" class="a" style="left:465.0px;top:129.7px;font-size:15px;color:#e0f0ee;letter-spacing:0.345px">Two-handed backhand</div>
<div id="t6" class="a" style="left:317.0px;top:170.8px;font-size:18px;color:#eef;letter-spacing:0.277px">103</div>
<div id="t7" class="a" style="left:366.0px;top:175.0px;font-size:13px;color:#dde;letter-spacing:0.000px">2</div>
<div id="t8" class="a" style="left:808.5px;top:32.7px;font-size:22px;color:#eef;letter-spacing:-0.314px;font-weight:bold">Affiliation</div>
<div id="t9" class="a" style="left:760.0px;top:83.5px;font-size:16px;color:#eeeeea;letter-spacing:-0.649px;font-weight:bold">French Riviera Tennis</div>
<div id="t10" class="a" style="left:760.0px;top:108.0px;font-size:16px;color:#eeeeea;letter-spacing:-0.693px;font-weight:bold">Academy</div>
<div id="t11" class="a" style="left:760.0px;top:132.1px;font-size:16px;color:#eeeeea;letter-spacing:-0.039px">Under contract until</div>
<div id="t12" class="a" style="left:760.0px;top:158.1px;font-size:16px;color:#4fe6de;letter-spacing:0.089px;font-weight:bold">27/11/2022</div>
<div id="t13" class="a" style="left:43.5px;top:223.1px;font-size:15.5px;color:#eeeeea;letter-spacing:-0.268px">Patience:</div>
<div id="t14" class="a" style="left:823.0px;top:275.2px;font-size:17px;color:#eeeeea;letter-spacing:-0.269px">Yes, I’ll take care of it.</div>
<div id="t15" class="a" style="left:63.0px;top:344.6px;font-size:17px;color:#eeeeea;letter-spacing:-0.161px">I’m open to negotiating with you. I’m all ears. What status would you be offering me within your team?</div>
<div id="t16" class="a" style="left:470.0px;top:414.6px;font-size:17px;color:#eeeeea;letter-spacing:-0.244px">Holger Rune, I’m offering you the status of <b style="color:#f6e60e">Key player</b> within our team</div>
<div id="t17" class="a" style="left:63.0px;top:483.6px;font-size:17px;color:#eeeeea;letter-spacing:-0.063px">I’m honored by your trust. Let's continue.</div>
<div id="t18" class="a" style="left:63.0px;top:553.0px;font-size:17px;color:#eeeeea;letter-spacing:-0.114px">Now let’s talk about contract length, please.</div>
<div id="t19" class="a" style="left:458.0px;top:669.8px;font-size:17.5px;color:#eeeeea;letter-spacing:0.359px">Contract duration</div>
<div id="t20" class="a" style="left:488.0px;top:714.2px;font-size:17.5px;color:#eeeeea;letter-spacing:-0.400px">2 Seasons</div>
<div id="t21" class="a" style="left:503.0px;top:769.5px;font-size:16px;color:#eeeeea;letter-spacing:0.216px">Accept</div>
<div id="t22" class="a" style="left:853.4px;top:878.9px;font-size:15.5px;color:#eeeeea;letter-spacing:0.188px">Cancel negotiation</div>
<div id="t23" class="a" style="left:1115.0px;top:42.5px;font-size:15.5px;color:#eeeeea;letter-spacing:-0.217px;font-weight:bold">2.8 M €</div>
<div id="t24" class="a" style="left:1173.0px;top:42.5px;font-size:15.5px;color:#eeeeea;letter-spacing:0.000px;font-weight:bold">|</div>
<div id="t25" class="a" style="left:1185.0px;top:42.5px;font-size:15.5px;color:#5bd33a;letter-spacing:-0.491px">+821.9 K €</div>
<div id="t26" class="a" style="left:1263.0px;top:42.5px;font-size:15.5px;color:#eeeeea;letter-spacing:0.000px">/</div>
<div id="t27" class="a" style="left:1277.0px;top:42.5px;font-size:15.5px;color:#f04c43;letter-spacing:-0.115px">-414.3 K €</div>
<div id="t28" class="a" style="left:1421.8px;top:31.4px;font-size:15.5px;color:#eeeeea;letter-spacing:-0.723px">My Little Aca</div>
<div id="t29" class="a" style="left:1421.8px;top:48.9px;font-size:15.5px;color:#eeeeea;letter-spacing:-0.315px">W5 - Fri 04 February 2022</div>
<div id="t30" class="a" style="left:1218.0px;top:143.4px;font-size:22px;color:#eeeeea;letter-spacing:-0.916px;font-weight:bold">Academy slots</div>
<div id="t31" class="a" style="left:1372.0px;top:149.3px;font-size:15px;color:#4fe6de;letter-spacing:0.920px">6/8</div>
<div id="t32" class="a" style="left:1267.0px;top:185.5px;font-size:15.5px;color:#eeeeea;letter-spacing:-0.396px">Key player :&nbsp; <span style="color:#4fe6de">0/1</span></div>
<div id="t33" class="a" style="left:1260.0px;top:220.7px;font-size:15.5px;color:#eeeeea;letter-spacing:-0.227px">Major player :&nbsp; <span style="color:#4fe6de">0/2</span></div>
<div id="t34" class="a" style="left:1251.0px;top:256.2px;font-size:15.5px;color:#eeeeea;letter-spacing:-0.165px">Promising player :&nbsp; <span style="color:#4fe6de">2</span></div>
<div id="t35" class="a" style="left:1249.7px;top:291.4px;font-size:15.5px;color:#eeeeea;letter-spacing:-0.279px">Secondary player :&nbsp; <span style="color:#4fe6de">4</span></div>
<div id="t36" class="a" style="left:1055.4px;top:395.6px;font-size:15.5px;color:#eeeeea;letter-spacing:0.090px">Compare to:</div>
<div id="t37" class="a" style="left:1181.0px;top:396.7px;font-size:15.5px;color:#eeeeea;letter-spacing:0.063px">Thai-Son Kwiatkowski</div>
<div id="t38" class="a" style="left:1276.6px;top:444.7px;font-size:15.5px;color:#eeeeea;letter-spacing:-0.071px">Status</div>
<div id="t39" class="a" style="left:1198.8px;top:479.9px;font-size:15.5px;color:#eeeeea;letter-spacing:0.156px">Contract duration</div>
<div id="t40" class="a" style="left:1221.0px;top:515.6px;font-size:15.5px;color:#eeeeea;letter-spacing:0.079px">Signing bonus</div>
<div id="t41" class="a" style="left:1156.3px;top:550.9px;font-size:15.5px;color:#eeeeea;letter-spacing:-0.206px">Academy revenue share</div>
<div id="t42" class="a" style="left:1282.7px;top:585.9px;font-size:15.5px;color:#eeeeea;letter-spacing:0.109px">Level</div>
<div id="t43" class="a" style="left:1257.7px;top:623.9px;font-size:15.5px;color:#eeeeea;letter-spacing:0.271px">Potential</div>
<div id="t44" class="a" style="left:1351.3px;top:444.7px;font-size:15.5px;color:#eeeeea;letter-spacing:-0.075px">Secondary player</div>
<div id="t45" class="a" style="left:1352.0px;top:479.9px;font-size:15.5px;color:#eeeeea;letter-spacing:0.000px">3</div>
<div id="t46" class="a" style="left:1351.3px;top:515.6px;font-size:15.5px;color:#eeeeea;letter-spacing:-1.070px">6 177 €</div>
<div id="t47" class="a" style="left:1351.3px;top:550.9px;font-size:15.5px;color:#eeeeea;letter-spacing:-0.166px">35%</div>
</div>
</body></html>
